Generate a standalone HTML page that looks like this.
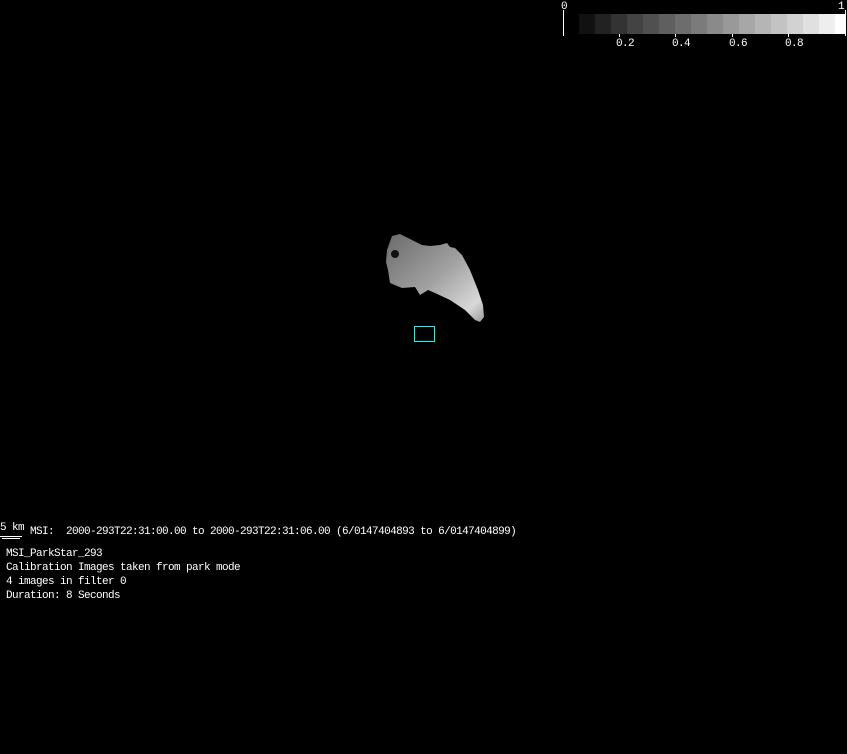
<!DOCTYPE html>
<html><head><meta charset="utf-8"><style>
html,body{margin:0;padding:0;background:#000;width:847px;height:754px;overflow:hidden}
.t{position:absolute;color:#fff;font-family:"Liberation Mono",monospace;font-size:11px;letter-spacing:-0.6px;line-height:14px;white-space:pre}
</style></head><body>
<svg width="847" height="754" style="position:absolute;left:0;top:0">
<defs>
<linearGradient id="g" x1="0" y1="0" x2="1" y2="1">
<stop offset="0" stop-color="#6a6a6a"/><stop offset="0.5" stop-color="#a0a0a0"/><stop offset="0.85" stop-color="#d8d8d8"/><stop offset="1" stop-color="#999"/>
</linearGradient>
</defs>
<g id="bar">
<rect x="579" y="14" width="16" height="20" fill="#111"/>
<rect x="595" y="14" width="16" height="20" fill="#222"/>
<rect x="611" y="14" width="16" height="20" fill="#333"/>
<rect x="627" y="14" width="16" height="20" fill="#434343"/>
<rect x="643" y="14" width="16" height="20" fill="#505050"/>
<rect x="659" y="14" width="16" height="20" fill="#5f5f5f"/>
<rect x="675" y="14" width="16" height="20" fill="#6d6d6d"/>
<rect x="691" y="14" width="16" height="20" fill="#7b7b7b"/>
<rect x="707" y="14" width="16" height="20" fill="#8a8a8a"/>
<rect x="723" y="14" width="16" height="20" fill="#999"/>
<rect x="739" y="14" width="16" height="20" fill="#a7a7a7"/>
<rect x="755" y="14" width="16" height="20" fill="#b5b5b5"/>
<rect x="771" y="14" width="16" height="20" fill="#c3c3c3"/>
<rect x="787" y="14" width="16" height="20" fill="#d2d2d2"/>
<rect x="803" y="14" width="16" height="20" fill="#e0e0e0"/>
<rect x="819" y="14" width="16" height="20" fill="#eee"/>
<rect x="835" y="14" width="11" height="20" fill="#fff"/>
<line x1="563.5" y1="10" x2="563.5" y2="36" stroke="#fff"/>
<line x1="845.5" y1="10" x2="845.5" y2="36" stroke="#fff"/>
<line x1="619.5" y1="34" x2="619.5" y2="37" stroke="#fff"/>
<line x1="675.5" y1="34" x2="675.5" y2="37" stroke="#fff"/>
<line x1="732.5" y1="34" x2="732.5" y2="37" stroke="#fff"/>
<line x1="788.5" y1="34" x2="788.5" y2="37" stroke="#fff"/>
</g>
<polygon fill="url(#g)" points="387,250 392,236 400,234 412,240 422,245 430,246 440,245 447,243 450,247 455,248 462,255 470,270 478,290 483,305 484,317 480,322 475,320 465,310 450,300 435,293 428,290 420,295 415,287 402,288 390,283 388,270 386,262"/>
<ellipse cx="395" cy="254" rx="4" ry="4" fill="#111"/>
<rect x="414.5" y="326.5" width="20" height="15" fill="none" stroke="#0ff"/>
<line x1="0" y1="536.5" x2="22" y2="536.5" stroke="#fff"/>
<line x1="2" y1="538.5" x2="20" y2="538.5" stroke="#fff"/>
</svg>
<div class="t" style="left:561px;top:0px">0</div>
<div class="t" style="left:838px;top:0px">1</div>
<div class="t" style="left:616px;top:37px">0.2</div>
<div class="t" style="left:672px;top:37px">0.4</div>
<div class="t" style="left:729px;top:37px">0.6</div>
<div class="t" style="left:785px;top:37px">0.8</div>
<div class="t" style="left:0px;top:521px">5 km</div>
<div class="t" style="left:30px;top:525px">MSI:  2000-293T22:31:00.00 to 2000-293T22:31:06.00 (6/0147404893 to 6/0147404899)</div>
<div class="t" style="left:6px;top:547px">MSI_ParkStar_293
Calibration Images taken from park mode
4 images in filter 0
Duration: 8 Seconds</div>
</body></html>
